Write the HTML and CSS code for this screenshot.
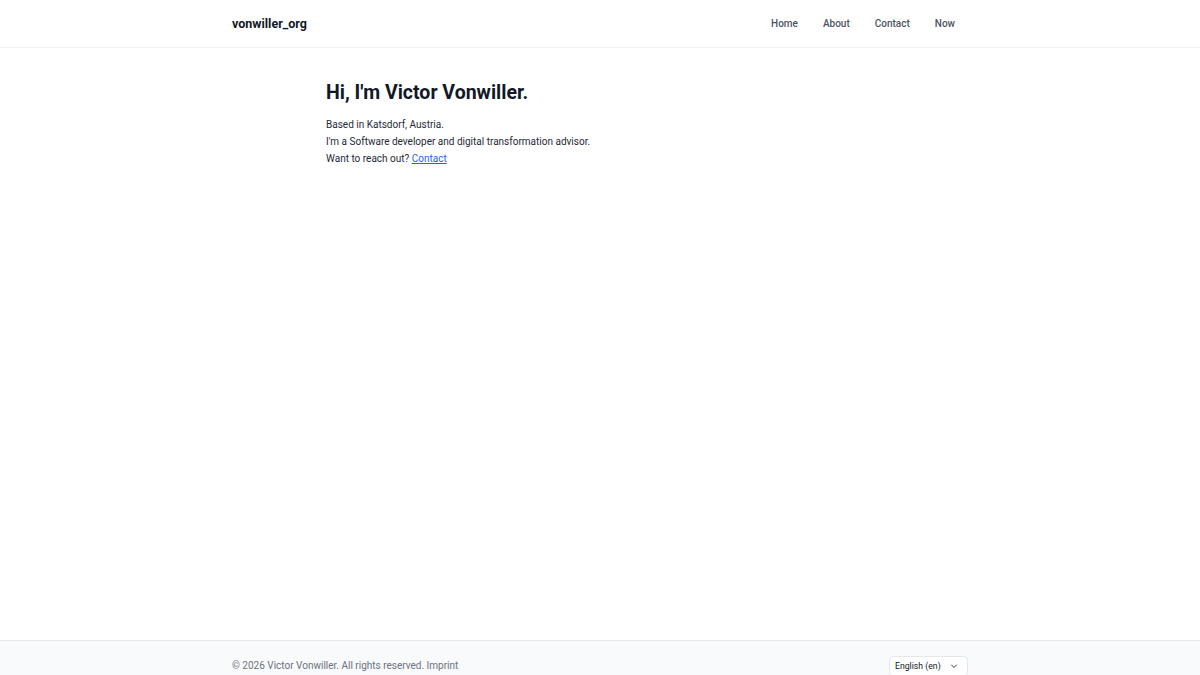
FILE: index.html
```html
<!DOCTYPE html>
<html lang="en">
<head>
<meta charset="utf-8">
<title>vonwiller_org</title>
<link rel="stylesheet" href="styles.css">
</head>
<body>
<div class="page">
  <header class="header">
    <div class="container header-inner">
      <a class="logo" href="#">vonwiller_org</a>
      <nav class="nav">
        <a href="#">Home</a>
        <a href="#">About</a>
        <a href="#">Contact</a>
        <a href="#">Now</a>
      </nav>
    </div>
  </header>
  <main class="main">
    <h1 class="title">Hi, I'm Victor Vonwiller.</h1>
    <p class="line">Based in Katsdorf, Austria.</p>
    <p class="line">I'm a Software developer and digital transformation advisor.</p>
    <p class="line">Want to reach out? <a class="link" href="#">Contact</a></p>
  </main>
  <footer class="footer">
    <div class="container footer-inner">
      <div class="copy">© 2026 Victor Vonwiller. All rights reserved. <a href="#">Imprint</a></div>
      <div class="lang">
        <span>English (en)</span>
        <svg class="chev" width="10" height="10" viewBox="0 0 20 20" fill="none" stroke="#374151" stroke-width="2" stroke-linecap="round" stroke-linejoin="round"><path d="M5 8l5 5 5-5"/></svg>
      </div>
    </div>
  </footer>
</div>
</body>
</html>
```
FILE: styles.css
```css
* { box-sizing: border-box; }
html, body { margin: 0; padding: 0; }
body {
  font-family: Roboto, "Liberation Sans", Arial, sans-serif;
  color: #1f2937;
  background: #fff;
}
a { color: inherit; text-decoration: none; }
.page {
  min-height: 675px;
  display: flex;
  flex-direction: column;
}
.container {
  width: 736px;
  margin: 0 auto;
}
.header {
  border-bottom: 1px solid #f1f2f4;
  height: 48px;
}
.header-inner {
  height: 47px;
  display: flex;
  align-items: center;
  justify-content: space-between;
}
.logo {
  font-weight: 700;
  font-size: 12.5px;
  color: #111827;
}
.nav {
  display: flex;
  gap: 25px;
  padding-right: 13px;
}
.nav a {
  font-size: 10px;
  font-weight: 500;
  color: #4b5563;
}
.main {
  flex: 1;
  width: 548px;
  margin: 0 auto;
  padding-top: 33px;
}
.title {
  font-size: 19.5px;
  font-weight: 700;
  color: #111827;
  margin: 0 0 11px;
  line-height: 24px;
}
.line {
  margin: 0;
  font-size: 10px;
  line-height: 17px;
  color: #1f2937;
}
.link {
  color: #2563eb;
  text-decoration: underline;
}
.footer {
  border-top: 1px solid #e5e7eb;
  background: #f9fafb;
  height: 35px;
}
.footer-inner {
  display: flex;
  justify-content: space-between;
  align-items: flex-start;
  padding-top: 14px;
}
.copy {
  font-size: 10px;
  color: #6b7280;
  line-height: 21px;
}
.lang {
  margin-top: 1px;
  width: 79px;
  display: flex;
  align-items: center;
  justify-content: space-between;
  height: 20px;
  padding: 0 8px 0 5px;
  background: #fff;
  border: 1px solid #e5e7eb;
  border-radius: 4px;
  font-size: 8.7px;
  color: #111827;
}
```
